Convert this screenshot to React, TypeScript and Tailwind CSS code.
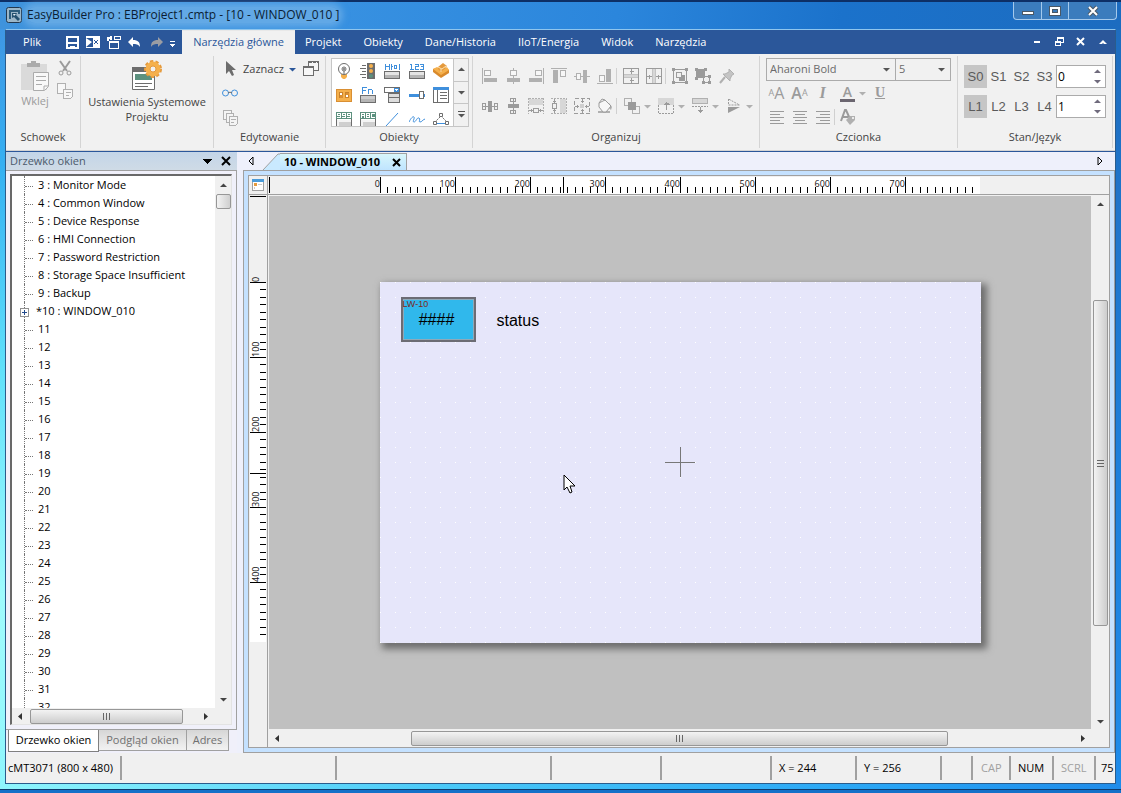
import type { ReactNode } from "react";

const GRAY = "#9b9b9b";
const LIGHT = "#b0b0b0";
const DARK = "#6d6d6d";
const BLUE = "#3f8fdc";
const ORANGE = "#f5b04c";
const GREEN = "#5d917f";

const Icon = ({
  children,
  size = 16,
  crisp = true,
}: {
  children: ReactNode;
  size?: number;
  crisp?: boolean;
}) => (
  <svg
    width={size}
    height={size}
    viewBox={`0 0 ${size} ${size}`}
    fill="none"
    shapeRendering={crisp ? "crispEdges" : "auto"}
    aria-hidden="true"
    className="shrink-0"
  >
    {children}
  </svg>
);

const Caret = ({ dir = "down", color = "#555" }: { dir?: string; color?: string }) => {
  const shapes: Record<string, string> = {
    down: "M0 2h7L3.500 5.500z",
    up: "M0 5h7L3.500 1.500z",
    left: "M5 0v7L1 3.500z",
    right: "M2 0v7l4-3.500z",
  };
  return (
    <svg width="7" height="7" viewBox="0 0 7 7" aria-hidden="true" className="shrink-0">
      <path d={shapes[dir]} fill={color} />
    </svg>
  );
};

/* ---------- object gallery icons ---------- */

const KeyBase = ({ fill = "#e4e4e4" }: { fill?: string }) => (
  <>
    <rect x="1" y="8" width="14" height="7" fill={fill} />
    <path d="M1 12h14v3H1z" fill="#b5b5b5" />
    <path d="M0.500 8.500h15v7h-15z" stroke={DARK} />
  </>
);

const DisplayBase = () => (
  <>
    <path d="M1 9h14v7H1z" fill="#f4f4f4" />
    <path d="M3 11h12v5H3z" fill="#cfcfcf" />
    <path d="M0.500 8v8M15.500 8v8M0 15.500h16" stroke={DARK} />
  </>
);

const objectIcons = [
  {
    name: "Lampa bitowa",
    icon: (
      <Icon crisp={false}>
        <path d="M5 10h6v4l-2 2H7l-2-2z" fill={ORANGE} />
        <circle cx="8" cy="6" r="5.500" stroke={DARK} fill="#fff" />
        <circle cx="8" cy="6" r="2" stroke={DARK} />
        <circle cx="8" cy="6" r="1" fill={DARK} />
        <path d="M8 8v3" stroke={DARK} />
      </Icon>
    ),
  },
  {
    name: "Lampa wielostanowa",
    icon: (
      <Icon crisp={false}>
        <path d="M7 0h8v16H7z" fill={DARK} />
        <path d="M2 2.500h4M0 5.500h6M2 8.500h4M0 11.500h6M2 14.500h4" stroke={DARK} />
        <circle cx="11" cy="3" r="2" fill={ORANGE} />
        <circle cx="11" cy="8" r="2" fill={ORANGE} />
        <circle cx="11" cy="13" r="2" fill={GREEN} />
      </Icon>
    ),
  },
  {
    name: "Ustaw bit",
    icon: (
      <Icon>
        <path d="M1.500 1v6M1 3.500h4M5.500 1v6M7.500 1v6M7 3.500h2M10.500 2v4M10 2.500h3M10 5.500h3M12.500 2v4M15.500 1v6" stroke={BLUE} />
        <KeyBase />
      </Icon>
    ),
  },
  {
    name: "Ustaw słowo",
    icon: (
      <Icon>
        <path
          d="M1 1.500h2M2.500 1v6M1 6.500h4M6 1.500h3.500v2H6.500v3H10M11 1.500h4M14.500 1v6M11 6.500h4M12 3.500h3"
          stroke={BLUE}
        />
        <KeyBase />
      </Icon>
    ),
  },
  {
    name: "Przełącznik",
    icon: (
      <Icon crisp={false}>
        <path d="M0 6l10-3 6 4v3l-8 5-8-6z" fill="#d98a2c" />
        <path d="M0 6l4-2 4 4 6-4 2 3-8 5z" fill={ORANGE} />
        <path d="M5 4l5-4 4 3-3 3-3 3-3-3z" fill="#e59a3d" />
        <path d="M5 4l4 2 4-3M8 6v3" stroke="#fde2b0" />
      </Icon>
    ),
  },
  {
    name: "Przełącznik wielostanowy",
    icon: (
      <Icon>
        <path d="M0.500 2.500h15v12h-15z" fill={ORANGE} stroke="#d98f33" />
        <path d="M3.500 5.500h3v5h-3zM9.500 5.500h3v5h-3z" fill="#fff" stroke="#c9822c" />
        <path d="M4 8h3v3H4zM10 6h3v2h-3z" fill="#d98f33" />
      </Icon>
    ),
  },
  {
    name: "Klawisz funkcyjny",
    icon: (
      <Icon>
        <path d="M2 0.500h5M2.500 0v7M2 3.500h4M8.500 2v5M8 2.500h4M12.500 3v4" stroke={BLUE} />
        <KeyBase fill="#ccc" />
      </Icon>
    ),
  },
  {
    name: "Lista opcji",
    icon: (
      <Icon>
        <path d="M0.500 0.500h15v5h-15z" stroke={DARK} fill="#fff" />
        <path d="M10 1h5v4h-5z" fill={BLUE} />
        <path d="M11 2h3l-1 2h-1z" fill="#fff" />
        <path d="M4.500 6.500h11v4h-11zM4.500 10.500h11v5h-11z" fill="#ddd" stroke={DARK} />
      </Icon>
    ),
  },
  {
    name: "Suwak",
    icon: (
      <Icon>
        <path d="M0 7h10v3H0zM14 7h2v3h-2z" fill={BLUE} />
        <path d="M10.500 4.500h4v7h-4z" stroke={DARK} fill="#fff" />
      </Icon>
    ),
  },
  {
    name: "Tabela",
    icon: (
      <Icon>
        <path d="M0.500 0.500h15v15h-15z" stroke={DARK} fill="#fff" />
        <path d="M0 0h16v3H0z" fill={BLUE} />
        <path d="M4.500 3v12M7 5.500h7M7 8.500h7M7 11.500h7" stroke={DARK} />
      </Icon>
    ),
  },
  {
    name: "Wartość liczbowa",
    icon: (
      <Icon>
        <path d="M0 1h16v7H0z" fill={GREEN} />
        <path
          d="M5 4.500H1.500v-2h3v4H1M10 4.500H6.500v-2h3v4H6M15 4.500h-3.500v-2h3v4H11"
          stroke="#fff"
        />
        <DisplayBase />
      </Icon>
    ),
  },
  {
    name: "Wartość ASCII",
    icon: (
      <Icon>
        <path d="M0 1h16v7H0z" fill={GREEN} />
        <path
          d="M1.500 7V2.500h3V7M1 4.500h3M6.500 2.500h3v4h-3zM6 4.500h3M15 2.500h-3.500v4H15"
          stroke="#fff"
        />
        <DisplayBase />
      </Icon>
    ),
  },
  {
    name: "Linia",
    icon: (
      <Icon crisp={false}>
        <path d="M2 15L14 2" stroke={BLUE} />
      </Icon>
    ),
  },
  {
    name: "Krzywa",
    icon: (
      <Icon crisp={false}>
        <path d="M0 11C2 7 4 5 5 6s-2 5 0 5 3-5 5-4-1 4 1 4 2-2 5-3" stroke={BLUE} />
      </Icon>
    ),
  },
  {
    name: "Łącznik",
    icon: (
      <Icon crisp={false}>
        <path d="M2 12.500h12" stroke={BLUE} />
        <path d="M8 5l6 6M7 6l-4 4" stroke={DARK} strokeDasharray="2 1" />
        <path d="M6.500 2.500h3v3h-3zM0.500 10.500h3v3h-3zM12.500 10.500h3v3h-3z" stroke={DARK} fill="#fff" />
      </Icon>
    ),
  },
];

/* ---------- arrange icons ---------- */

const alignIcons = [
  { line: "M0.500 0v16", box: "M2.500 2.500h6v5h-6z", solid: "M2 10h13v4H2z" },
  { line: "M8.500 0v16", box: "M5.500 2.500h6v5h-6z", solid: "M2 10h13v4H2z" },
  { line: "M15.500 0v16", box: "M7.500 2.500h6v5h-6z", solid: "M1 10h13v4H1z" },
  { line: "M0 0.500h16", box: "M9.500 2.500h5v6h-5z", solid: "M2 2h5v13H2z" },
  { line: "M0 8.500h16", box: "M2.500 5.500h4v6h-4z", solid: "M9 2h4v13H9z" },
  { line: "M0 15.500h16", box: "M2.500 7.500h5v6h-5z", solid: "M9 1h5v13H9z" },
];

const spacingIcons = [
  <>
    <path d="M0 8.500h16M0.500 5.500h3v6h-3zM12.500 5.500h3v6h-3z" stroke={GRAY} fill="#f0f0f0" />
    <path d="M6 3h4v11H6z" fill={GRAY} />
  </>,
  <>
    <path d="M8.500 0v16M5.500 0.500h5v3h-5zM5.500 12.500h5v3h-5z" stroke={GRAY} fill="#f0f0f0" />
    <path d="M3 6h11v4H3z" fill={GRAY} />
  </>,
  <>
    <path d="M1 1h14v6H1z" fill="#d7d7d7" />
    <path d="M0.500 0v16M15.500 0v16M1 0.500h14" stroke={LIGHT} strokeDasharray="2 1" />
    <path d="M5.500 10.500h5v4h-5zM1 12.500h4M11 12.500h4M3.500 11v3M12.500 11v3" stroke={GRAY} />
  </>,
  <>
    <path d="M9 1h6v14H9z" fill="#d7d7d7" />
    <path d="M0 0.500h16M0 15.500h16M15.500 0v16" stroke={LIGHT} strokeDasharray="2 1" />
    <path d="M1.500 5.500h4v5h-4zM3.500 1v4M3.500 11v4M2 3.500h3M2 12.500h3" stroke={GRAY} />
  </>,
  <>
    <path d="M0.500 0.500h15v15h-15z" stroke={GRAY} strokeDasharray="4 2" />
    <path d="M6 6h4v4H6z" fill="#cfcfcf" />
    <path d="M8.500 1v4M8.500 11v4M1 8.500h4M11 8.500h4M7 3.500h3M7 12.500h3M3.500 7v3M12.500 7v3" stroke={GRAY} />
  </>,
  <g shapeRendering="auto">
    <path d="M1 13h12v2H1zM12 5l3 4-1 3-3-3z" fill={LIGHT} />
    <path d="M2 5l6-3 6 6-5 6H6L2 9zM2 5l3-4 3 1" stroke={GRAY} fill="#f7f7f7" />
  </g>,
];

const layerIcons = [
  <>
    <path d="M0.500 0.500h7v7h-7zM8.500 8.500h7v7h-7z" stroke={LIGHT} />
    <path d="M4 4h8v8H4z" fill={GRAY} />
  </>,
  <>
    <path d="M0 0h16v7H0z" fill="#d7d7d7" />
    <path d="M0.500 7v8.500h15V7" stroke={GRAY} strokeDasharray="2 1" />
    <path d="M8.500 4v8M7 5.500h4M6 6.500h6" stroke={GRAY} />
  </>,
  <>
    <path d="M0.500 0.500h15v5h-15z" fill="#d7d7d7" stroke={LIGHT} />
    <path d="M0 8.500h16" stroke={GRAY} strokeDasharray="2 1" />
    <path d="M8.500 9v6M6 12.500h5M7 13.500h3" stroke={GRAY} />
  </>,
  <g shapeRendering="auto">
    <path d="M2.500 1v6h11z" stroke={GRAY} strokeDasharray="2 1" />
    <path d="M2 9h12L2 15z" fill={GRAY} />
  </g>,
];

const FrameIcon = ({ vertical = false }: { vertical?: boolean }) => (
  <Icon>
    <g transform={vertical ? "rotate(90 8 8)" : undefined}>
      <path d="M1 7h14v3H1z" fill="#d7d7d7" />
      <path d="M1 6.500h14M1 9.500h14" stroke="#c4c4c4" />
      <path d="M0.500 0.500h15v15h-15zM8.500 1v5M8.500 10v5M7 3.500h4M7 12.500h4" stroke={GRAY} />
    </g>
  </Icon>
);

const ToolButton = ({
  label,
  children,
  className = "w-[23px]",
}: {
  label: string;
  children: ReactNode;
  className?: string;
}) => (
  <button aria-label={label} className={`flex h-6 items-center justify-center ${className}`}>
    {children}
  </button>
);

const Group = ({
  title,
  className,
  children,
}: {
  title?: string;
  className: string;
  children: ReactNode;
}) => (
  <section className={`flex shrink-0 flex-col border-r border-[#d4d4d4] ${className}`}>
    <div className="h-[73px]">{children}</div>
    {title && <h2 className="text-center leading-4">{title}</h2>}
  </section>
);

const Divider = () => <span className="h-4 w-px bg-[#d0d0d0]" />;

/* ---------- title bar and menu ---------- */

const TitleBar = () => (
  <header className="flex h-[29px] items-start justify-between border-t-2 border-[#0d2f66] bg-[linear-gradient(100deg,#3f93dc_0%,#3a93e2_25%,#2b86dc_55%,#1b72cb_75%,#1c6cc0_100%)] pr-1 pl-[6px]">
    <div className="flex h-[26px] items-center gap-[5px]">
      <svg width="16" height="16" viewBox="0 0 16 16" aria-hidden="true">
        <rect x="0.500" y="0.500" width="15" height="15" rx="2" fill="#9bb6c8" stroke="#22384f" />
        <path d="M4 12V4h9v3" fill="none" stroke="#2c5c7c" strokeWidth="2" />
        <path d="M6 6h5l-1 2 4 4-2 2-4-4-2 1z" fill="#24516f" />
        <path d="M7 7h3l-2 2z" fill="#e6f1f7" />
      </svg>
      <h1 className="rounded-full bg-[#7db8ea]/60 text-xs text-[#0b1d33] shadow-[0_0_6px_4px_#7db8ea99]">
        EasyBuilder Pro : EBProject1.cmtp - [10 - WINDOW_010 ]
      </h1>
    </div>
    <div className="flex h-[18px] overflow-hidden rounded-b border border-t-0 border-[#a4c9ec] bg-[#3b7cbd]">
      <button aria-label="Minimalizuj" className="flex w-[28px] items-center justify-center border-r border-[#a4c9ec]">
        <Icon size={14}>
          <path d="M1.500 7.500h11v3h-11z" fill="#fff" stroke="#4a5866" />
        </Icon>
      </button>
      <button aria-label="Maksymalizuj" className="flex w-[27px] items-center justify-center border-r border-[#a4c9ec]">
        <Icon size={14}>
          <path d="M1.500 2.500h11v9h-11z" fill="#fff" stroke="#4a5866" />
          <path d="M4.500 5.500h5v3h-5z" fill="#3b7cbd" stroke="#4a5866" />
        </Icon>
      </button>
      <button aria-label="Zamknij" className="flex w-[47px] items-center justify-center">
        <Icon size={14} crisp={false}>
          <path d="M3 3l8 8M11 3l-8 8" stroke="#4a5866" strokeWidth="4" />
          <path d="M3 3l8 8M11 3l-8 8" stroke="#fff" strokeWidth="2" />
        </Icon>
      </button>
    </div>
  </header>
);

const MenuBar = () => {
  const tabs = ["Projekt", "Obiekty", "Dane/Historia", "IIoT/Energia", "Widok", "Narzędzia"];
  return (
    <nav className="flex h-[24px] items-center bg-[#2b579a] text-white">
      <button className="w-[52px]">Plik</button>
      <div className="flex w-[124px] items-center gap-1 pl-[6px]">
        <button aria-label="Zapisz" className="w-[17px]">
          <Icon>
            <path d="M3 3h11v11H3z" stroke="#fff" strokeWidth="2" />
            <path d="M2 8h13v2H2zM6 12h5v2H6z" fill="#fff" />
          </Icon>
        </button>
        <button aria-label="Kompiluj" className="w-[17px]">
          <Icon crisp={false}>
            <path d="M1 2h14v12H1z" fill="#fff" />
            <path d="M1 4h13v9H1z" fill="#2b579a" />
            <path d="M1 4l6 4-6 5zM8 4h6v9H8z" fill="#fff" />
            <path d="M9 6l4 4M13 6l-4 4" stroke="#2b579a" />
          </Icon>
        </button>
        <button aria-label="Pobierz" className="w-[17px]">
          <Icon>
            <path d="M3.500 7.500h9v7h-9zM3 8.500h9M8.500 2.500h6v3h-6z" stroke="#fff" />
            <path d="M2 7V4h4M5 2v4" stroke="#fff" strokeWidth="2" />
          </Icon>
        </button>
        <button aria-label="Cofnij" className="w-[17px]">
          <Icon crisp={false}>
            <path d="M6 3v3c5 0 7 2 7 7-2-3-4-3-7-3v3L1 8z" fill="#fff" />
          </Icon>
        </button>
        <button aria-label="Ponów" className="w-[17px]">
          <Icon crisp={false}>
            <path d="M10 3v3c-5 0-7 2-7 7 2-3 4-3 7-3v3l5-5z" fill="#9b9da3" />
          </Icon>
        </button>
        <button aria-label="Dostosuj" className="pt-1">
          <Icon size={7}>
            <path d="M1 0.500h5" stroke="#fff" />
            <path d="M1 3h5L3.500 6z" fill="#fff" />
          </Icon>
        </button>
      </div>
      <button className="h-full w-[113px] border-t border-[#e8e8e8] bg-[#f1f1f1] whitespace-nowrap text-[#2b579a]">
        Narzędzia główne
      </button>
      <div className="flex items-center gap-[22px] pl-[10px]">
        {tabs.map((tab) => (
          <button key={tab}>{tab}</button>
        ))}
      </div>
      <div className="ml-auto flex items-center gap-[10px] pr-[6px]">
        <button aria-label="Minimalizuj okno">
          <Icon size={12}>
            <path d="M3 5h6v2H3z" fill="#fff" />
          </Icon>
        </button>
        <button aria-label="Przywróć okno">
          <Icon size={12}>
            <path d="M4.500 2.500h6v4h-6z" stroke="#fff" />
            <path d="M4 1h7v2H4z" fill="#fff" />
            <path d="M2.500 5.500h5v4h-5z" stroke="#fff" fill="#2b579a" />
            <path d="M2 5h6v2H2z" fill="#fff" />
          </Icon>
        </button>
        <button aria-label="Zamknij okno">
          <Icon size={12} crisp={false}>
            <path d="M2 2l7 7M9 2L2 9" stroke="#fff" strokeWidth="2" />
          </Icon>
        </button>
        <button aria-label="Zwiń wstążkę">
          <Icon size={12} crisp={false}>
            <path d="M2 8l4-4 4 4H7L6 7 5 8z" fill="#fff" />
          </Icon>
        </button>
      </div>
    </nav>
  );
};

/* ---------- ribbon ---------- */

const StateRow = ({
  labels,
  value,
  name,
}: {
  labels: string[];
  value: string;
  name: string;
}) => (
  <div className="flex h-[23px] items-center">
    {labels.map((label) => (
      <button
        key={label}
        className={`h-full w-[23px] font-['Liberation_Sans',sans-serif] text-[13px] text-[#5a5a5a] ${
          label === "S0" || label === "L1" ? "bg-[#c6c6c6]" : ""
        }`}
      >
        {label}
      </button>
    ))}
    <div className="flex h-full w-[50px] border border-[#ababab] bg-white">
      <input aria-label={name} defaultValue={value} className="w-8 pl-px text-xs text-black outline-none" />
      <div className="flex flex-1 flex-col items-center justify-center gap-[3px]">
        <button aria-label={`${name}: więcej`}>
          <Caret dir="up" color="#6f6a7c" />
        </button>
        <button aria-label={`${name}: mniej`}>
          <Caret color="#6f6a7c" />
        </button>
      </div>
    </div>
  </div>
);

const alignLines = [
  "M0 1.500h14M0 4.500h10M0 7.500h14M0 10.500h10M0 13.500h14",
  "M0 1.500h14M2 4.500h10M0 7.500h14M2 10.500h10M0 13.500h14",
  "M0 1.500h14M4 4.500h10M0 7.500h14M4 10.500h10M0 13.500h14",
];

const Ribbon = () => (
  <div className="flex h-[97px] overflow-hidden border-b border-[#d4d4d4] bg-[#f1f1f1] pt-[2px] pb-[2px] text-[#444]">
    <Group title="Schowek" className="w-[75px]">
      <div className="flex h-full gap-[7px] pt-[4px] pl-[14px]">
        <button className="flex w-[30px] flex-col items-center text-[#9b9b9b]">
          <svg width="30" height="32" viewBox="0 0 30 32" aria-hidden="true">
            <path d="M1 4h26v26H1z" fill="#dadada" />
            <path d="M7 3h4V1h5v2h4v4H7z" fill="#ababab" />
            <path d="M13.500 12.500h15v14l-4 4h-11z" fill="#f8f8f8" stroke="#ababab" />
            <path d="M28 26h-4v4M16 16.500h10M16 20.500h10M16 24.500h6" stroke="#ababab" fill="none" />
          </svg>
          <span className="mt-px">Wklej</span>
        </button>
        <div className="flex flex-col gap-[7px]">
          <button aria-label="Wytnij">
            <Icon crisp={false}>
              <path d="M3 1l7 10M13 1L6 11" stroke={GRAY} strokeWidth="2" />
              <circle cx="4" cy="13" r="2" stroke={GRAY} />
              <circle cx="12" cy="13" r="2" stroke={GRAY} />
            </Icon>
          </button>
          <button aria-label="Kopiuj">
            <Icon>
              <path d="M0.500 0.500h8v10h-8z" stroke={LIGHT} fill="#f7f7f7" />
              <path d="M6.500 6.500h9v7l-2 2h-7z" stroke={LIGHT} fill="#f7f7f7" />
              <path d="M9 9.500h5M9 12.500h3" stroke={LIGHT} />
            </Icon>
          </button>
        </div>
      </div>
    </Group>

    <Group className="w-[133px]">
      <button className="flex w-full flex-col items-center pt-[4px] leading-[15px]">
        <svg width="32" height="34" viewBox="0 0 32 34" aria-hidden="true">
          <path d="M1.500 9.500h22v20h-22z" fill="#fff" stroke={DARK} />
          <path d="M1 7h14v5H1z" fill={DARK} />
          <path d="M4 14h17v6H4z" fill={GREEN} />
          <path d="M4 23.500h17M4 26.500h13" stroke={DARK} />
          <circle cx="22" cy="9" r="7" fill="none" stroke="#e59a3d" strokeWidth="4" strokeDasharray="3 2" />
          <circle cx="22" cy="9" r="5" fill="none" stroke={ORANGE} strokeWidth="5" />
          <circle cx="22" cy="9" r="3" fill="#f1f1f1" stroke="#e59a3d" />
        </svg>
        <span>Ustawienia Systemowe</span>
        <span>Projektu</span>
      </button>
    </Group>

    <Group title="Edytowanie" className="w-[112px]">
      <div className="flex flex-col items-start pl-[8px]">
        <div className="flex h-[26px] items-center gap-1">
          <button className="flex items-center gap-[5px]">
            <Icon crisp={false}>
              <path d="M4 0v13l3-3 3 5 2-1-2-5h4z" fill={DARK} />
            </Icon>
            Zaznacz
            <Caret color="#2b579a" />
          </button>
          <ToolButton label="Okna">
            <Icon>
              <path d="M5.500 0.500h10v9h-10z" stroke={DARK} fill="#f7f7f7" />
              <path d="M6 1.500h9" stroke={DARK} strokeDasharray="3 1" />
              <path d="M0.500 5.500h10v9h-10z" stroke={DARK} fill="#f7f7f7" />
              <path d="M0 5h11v2H0z" fill={DARK} />
            </Icon>
          </ToolButton>
        </div>
        <ToolButton label="Znajdź" className="w-4">
          <Icon crisp={false}>
            <circle cx="3.500" cy="7" r="3" stroke={BLUE} />
            <circle cx="12.500" cy="7" r="3" stroke={BLUE} />
            <path d="M6 7c1-1 3-1 4 0" stroke={DARK} />
          </Icon>
        </ToolButton>
        <ToolButton label="Powiel" className="w-4">
          <Icon>
            <path d="M1.500 0.500h8v9h-8z" stroke={LIGHT} fill="#f4f4f4" />
            <path d="M4.500 3.500h7v9h-7z" stroke={LIGHT} fill="#f4f4f4" />
            <path d="M7.500 6.500h8v7l-2 2h-6z" stroke={LIGHT} fill="#f4f4f4" />
            <path d="M9 9.500h5M9 12.500h3" stroke={LIGHT} />
          </Icon>
        </ToolButton>
      </div>
    </Group>

    <Group title="Obiekty" className="w-[147px]">
      <div className="flex h-[71px] w-[143px] pt-[2px] pl-[5px]">
        <div className="grid w-[123px] auto-rows-[24px] grid-cols-5 overflow-hidden border border-[#c6c6c6] bg-white">
          {objectIcons.map((item) => (
            <ToolButton key={item.name} label={item.name} className="w-full">
              {item.icon}
            </ToolButton>
          ))}
        </div>
        <div className="flex w-[15px] flex-col divide-y divide-[#c6c6c6] border border-l-0 border-[#c6c6c6]">
          <button aria-label="W górę" className="flex flex-1 items-center justify-center">
            <Caret dir="up" />
          </button>
          <button aria-label="W dół" className="flex flex-1 items-center justify-center">
            <Caret />
          </button>
          <button aria-label="Więcej" className="flex flex-1 flex-col items-center justify-center">
            <span className="h-px w-[7px] bg-[#555]" />
            <Caret />
          </button>
        </div>
      </div>
    </Group>

    <Group title="Organizuj" className="w-[287px]">
      <div className="flex flex-col gap-[6px] pt-[8px] pl-[5px]">
        <div className="flex items-center">
          {alignIcons.map((icon, index) => (
            <ToolButton key={index} label={`Wyrównaj ${index + 1}`}>
              <Icon>
                <path d={icon.line} stroke={LIGHT} />
                <path d={icon.box} stroke={LIGHT} fill="#f7f7f7" />
                <path d={icon.solid} fill={LIGHT} />
              </Icon>
            </ToolButton>
          ))}
          <Divider />
          <ToolButton label="Ta sama wysokość" className="ml-[2px] w-[23px]">
            <FrameIcon />
          </ToolButton>
          <ToolButton label="Ta sama szerokość">
            <FrameIcon vertical />
          </ToolButton>
          <Divider />
          <ToolButton label="Grupuj" className="ml-[2px] w-[23px]">
            <Icon>
              <path d="M1.500 1.500h13v13h-13z" stroke={GRAY} />
              <path d="M0 0h3v3H0zM13 0h3v3h-3zM0 13h3v3H0zM13 13h3v3h-3zM7 7h6v6H7z" fill={GRAY} />
              <path d="M4.500 4.500h5v5h-5z" stroke={GRAY} fill="#f0f0f0" />
            </Icon>
          </ToolButton>
          <ToolButton label="Rozgrupuj">
            <Icon>
              <path d="M8.500 13.500v-5h6v6h-6z" stroke={GRAY} fill="#f0f0f0" />
              <path d="M1 1h9v9H1zM0 0h3v3H0zM9 0h3v3H9zM0 9h3v3H0z" fill={GRAY} />
              <path d="M13 7h3v3h-3zM7 13h3v3H7zM13 13h3v3h-3z" fill={GRAY} />
            </Icon>
          </ToolButton>
          <ToolButton label="Przypnij" className="w-[25px]">
            <Icon crisp={false}>
              <path d="M10 1l5 5-2 1-2 4v2L4 6h2l4-2z" fill="#c4c4c4" stroke={LIGHT} />
              <path d="M6 9l-5 6" stroke={LIGHT} strokeWidth="2" />
            </Icon>
          </ToolButton>
        </div>
        <div className="flex items-center">
          {spacingIcons.map((icon, index) => (
            <ToolButton key={index} label={`Odstęp ${index + 1}`}>
              <Icon>{icon}</Icon>
            </ToolButton>
          ))}
          <Divider />
          {layerIcons.map((icon, index) => (
            <ToolButton key={index} label={`Warstwa ${index + 1}`} className="w-[34px] gap-1 pl-[6px]">
              <Icon>{icon}</Icon>
              <Caret color={LIGHT} />
            </ToolButton>
          ))}
        </div>
      </div>
    </Group>

    <Group title="Czcionka" className="w-[198px]">
      <div className="flex pt-[2px] pl-[6px] text-[#6a6a6a]">
        <div className="relative">
          <select aria-label="Czcionka" className="h-[23px] w-[130px] appearance-none border border-[#ababab] bg-[#f1f1f1] pl-[3px]">
            <option>Aharoni Bold</option>
          </select>
          <span className="pointer-events-none absolute top-2 right-[6px]">
            <Caret />
          </span>
        </div>
        <div className="relative">
          <select aria-label="Rozmiar czcionki" className="h-[23px] w-[55px] appearance-none border border-l-0 border-[#ababab] bg-[#f1f1f1] pl-[3px]">
            <option>5</option>
          </select>
          <span className="pointer-events-none absolute top-2 right-[6px]">
            <Caret />
          </span>
        </div>
      </div>
      <div className="flex items-center pl-[5px] text-[#9b9b9b]">
        <ToolButton label="Powiększ czcionkę">
          <span className="text-[9px]">A</span>
          <span className="text-base">A</span>
        </ToolButton>
        <ToolButton label="Pomniejsz czcionkę">
          <span className="text-base font-semibold">A</span>
          <span className="text-[9px]">A</span>
        </ToolButton>
        <ToolButton label="Kursywa">
          <span className="font-['Liberation_Serif',serif] text-base font-bold italic">I</span>
        </ToolButton>
        <ToolButton label="Kolor czcionki" className="w-[38px] gap-1">
          <span className="border-b-3 border-[#6b6670] px-[3px] text-sm leading-[14px] font-semibold">A</span>
          <Caret color={LIGHT} />
        </ToolButton>
        <ToolButton label="Podkreślenie" className="w-4">
          <span className="font-['Liberation_Serif',serif] text-sm font-bold underline">U</span>
        </ToolButton>
      </div>
      <div className="flex items-center pl-[5px]">
        {alignLines.map((d, index) => (
          <ToolButton key={d} label={`Wyrównanie tekstu ${index + 1}`}>
            <Icon size={14}>
              <path d={d} stroke={GRAY} />
            </Icon>
          </ToolButton>
        ))}
        <Divider />
        <ToolButton label="Styl tekstu" className="w-[25px]">
          <Icon crisp={false}>
            <path d="M1 12L5 1h1l4 9M2 8h6" stroke={GRAY} strokeWidth="2" />
            <path d="M6 11l4-4h5v4l-5 5z" fill={LIGHT} />
            <circle cx="13" cy="9" r="1" fill="#fff" />
          </Icon>
        </ToolButton>
      </div>
    </Group>

    <Group title="Stan/Język" className="w-[155px]">
      <div className="flex flex-col gap-[7px] pt-[9px] pl-[6px]">
        <StateRow name="Stan" labels={["S0", "S1", "S2", "S3"]} value="0" />
        <StateRow name="Język" labels={["L1", "L2", "L3", "L4"]} value="1" />
      </div>
    </Group>
  </div>
);

/* ---------- scrollbars ---------- */

const Grip = ({ vertical = false }: { vertical?: boolean }) => (
  <Icon size={9}>
    <path
      d={vertical ? "M1 1.500h7M1 4.500h7M1 7.500h7" : "M1.500 1v7M4.500 1v7M7.500 1v7"}
      stroke="#666"
    />
  </Icon>
);

/* ---------- window tree ---------- */

const namedWindows = [
  "3 : Monitor Mode",
  "4 : Common Window",
  "5 : Device Response",
  "6 : HMI Connection",
  "7 : Password Restriction",
  "8 : Storage Space Insufficient",
  "9 : Backup",
  "*10 : WINDOW_010",
];
const windows = [...namedWindows, ...Array.from({ length: 22 }, (_, i) => `${i + 11}`)];

const WindowTree = () => (
  <aside className="flex w-[231px] shrink-0 flex-col bg-[#f0f0fa]">
    <div className="flex h-[18px] shrink-0 items-center bg-[linear-gradient(#c3d5e8,#cfdbe6)] pr-[6px] pl-[4px] text-[#4b5a6b]">
      <h2 className="flex-1">Drzewko okien</h2>
      <button aria-label="Menu panelu" className="mr-[9px]">
        <Icon size={10}>
          <path d="M0 3h10L5 8z" fill="#000" />
        </Icon>
      </button>
      <button aria-label="Zamknij panel">
        <Icon size={10} crisp={false}>
          <path d="M1 1l8 8M9 1L1 9" stroke="#000" strokeWidth="2" />
        </Icon>
      </button>
    </div>
    <div className="flex min-h-0 flex-1 flex-col border-t border-r border-b border-[#a0a0a0] px-[4px] pt-[3px] pb-[4px]">
      <div className="flex min-h-0 flex-1 flex-col border border-t-2 border-l-2 border-[#e3e3e3] border-t-[#696969] border-l-[#696969] bg-white">
        <div className="flex min-h-0 flex-1">
          <ul className="min-h-0 flex-1 overflow-hidden">
            {windows.map((name, index) => (
              <li key={name} className="flex h-[18px] items-center text-black">
                <span className="ml-[12px] flex h-full w-[9px] items-center border-l border-dotted border-[#777] pt-[3px]">
                  {index === 7 ? (
                    <button aria-label="Rozwiń WINDOW_010" className="-ml-[5px] bg-white">
                      <Icon size={9}>
                        <path d="M0.500 0.500h8v8h-8z" stroke="#919191" />
                        <path d="M2 4.500h5M4.500 2v5" stroke="#224a8c" />
                      </Icon>
                    </button>
                  ) : (
                    <span className="w-full border-t border-dotted border-[#777]" />
                  )}
                </span>
                <span className={index === 7 ? "pl-[3px]" : "pl-[5px]"}>{name}</span>
              </li>
            ))}
          </ul>
          <div className="flex w-4 flex-col items-center bg-[#f0f0f0] pt-[6px] pb-[5px]">
            <button aria-label="Przewiń w górę">
              <Caret dir="up" color="#444" />
            </button>
            <span className="mt-[5px] h-[15px] w-[15px] rounded-xs border border-[#979797] bg-[linear-gradient(90deg,#f3f3f3,#cfcfcf)]" />
            <button aria-label="Przewiń w dół" className="mt-auto">
              <Caret color="#444" />
            </button>
          </div>
        </div>
        <div className="flex h-4 items-center bg-[#f0f0f0] pr-[22px] pl-[5px]">
          <button aria-label="Przewiń w lewo">
            <Caret dir="left" color="#333" />
          </button>
          <span className="mr-auto ml-[6px] flex h-[15px] w-[153px] items-center justify-center rounded-xs border border-[#979797] bg-[linear-gradient(#f3f3f3,#cdcdcd)]">
            <Grip />
          </span>
          <button aria-label="Przewiń w prawo">
            <Caret dir="right" color="#333" />
          </button>
        </div>
      </div>
    </div>
    <div className="flex h-[23px] shrink-0 items-start pl-[2px] text-[#707070]">
      <button className="h-[22px] w-[91px] border border-t-0 border-[#808080] bg-white text-black">Drzewko okien</button>
      <button className="h-[21px] w-[88px] border-r border-b border-[#a0a0a0] bg-[linear-gradient(#d6d6d6,#f2f2f2)]">
        Podgląd okien
      </button>
      <button className="h-[21px] w-[42px] border-r border-b border-[#a0a0a0] bg-[linear-gradient(#d6d6d6,#f2f2f2)]">
        Adres
      </button>
    </div>
  </aside>
);

/* ---------- rulers: one step of 10 units is 7.5 px ---------- */

const HorizontalRuler = () => (
  <svg width="712" height="18" shapeRendering="crispEdges" className="shrink-0" aria-hidden="true">
    <rect x="112" y="1" width="600" height="17" fill="#fff" />
    <rect x="1" y="1" width="1" height="16" fill="#000" />
    <rect x="295" y="1" width="1" height="16" fill="#000" />
    {Array.from({ length: 80 }, (_, i) => {
      const major = i % 10 === 0;
      return (
        <rect
          key={i}
          x={112 + Math.floor(i * 7.5)}
          y={major ? 1 : 11}
          width="1"
          height={major ? 16 : 6}
          fill="#000"
        />
      );
    })}
    {Array.from({ length: 8 }, (_, i) => (
      <text key={i} x={112 + i * 75} y="11" fontSize="9" textAnchor="end" fill="#111">
        {i * 100}
      </text>
    ))}
  </svg>
);

const VerticalRuler = () => (
  <svg width="18" height="448" shapeRendering="crispEdges" className="shrink-0" aria-hidden="true">
    <rect x="1" y="87" width="16" height="360" fill="#fff" />
    <rect x="1" y="1" width="16" height="1" fill="#000" />
    <rect x="1" y="278" width="16" height="1" fill="#000" />
    {Array.from({ length: 48 }, (_, i) => {
      const major = i % 10 === 0;
      return (
        <rect
          key={i}
          x={major ? 1 : 11}
          y={87 + Math.floor(i * 7.5)}
          width={major ? 16 : 6}
          height="1"
          fill="#000"
        />
      );
    })}
    {Array.from({ length: 5 }, (_, i) => (
      <text
        key={i}
        fontSize="9"
        fill="#111"
        transform={`translate(10 ${87 + i * 75}) rotate(-90)`}
      >
        {i * 100}
      </text>
    ))}
  </svg>
);

/* ---------- editor ---------- */

const Screen = () => (
  <div className="relative h-[361px] w-[601px] shrink-0 bg-[#e6e6fa] font-['Liberation_Sans',sans-serif] text-base text-black shadow-[4px_4px_7px_2px_#6e6e6e]">
    <svg width="100%" height="100%" aria-hidden="true" className="absolute inset-0">
      <defs>
        <pattern id="grid" width="15" height="15" patternUnits="userSpaceOnUse">
          <rect width="1" height="1" fill="#fff" />
        </pattern>
      </defs>
      <rect width="100%" height="100%" fill="url(#grid)" />
      <path d="M285 180.500h30M300.500 165v30" stroke="#777" shapeRendering="crispEdges" />
    </svg>
    <div className="absolute top-[15px] left-[21px] flex h-[45px] w-[75px] items-center justify-center border-2 border-[#6c6c74] bg-[#30b8ec] pr-[3px] shadow-[inset_0_0_0_1px_#8fa9b8]">
      <span className="absolute top-0 left-0 text-[9px] leading-[10px] text-[#7a2a1c]">LW-10</span>
      <span>####</span>
    </div>
    <span className="absolute top-[27px] left-[117px]">status</span>
    <svg width="13" height="20" viewBox="0 0 13 20" aria-hidden="true" className="absolute top-[192px] left-[183px]">
      <path d="M1 1v15l3-3 3 6 2-1-2-6h5z" fill="#fff" stroke="#000" />
    </svg>
  </div>
);

const Editor = () => (
  <main className="ml-[6px] flex min-w-0 flex-1 flex-col">
    <div className="flex h-[18px] shrink-0 items-center justify-between">
      <div className="flex h-full items-center">
        <button aria-label="Poprzednia karta" className="pl-[3px]">
          <Icon size={10} crisp={false}>
            <path d="M7 1v8L3 5z" stroke="#000" />
          </Icon>
        </button>
        <div className="flex h-full items-end">
          <svg width="18" height="17" viewBox="0 0 18 17" aria-hidden="true" className="ml-[6px]">
            <path d="M1 17L16 1h2v16z" fill="#c9e9ff" />
            <path d="M1 17L16 1h2" stroke="#a0a0a0" fill="none" />
          </svg>
          <div className="flex h-[17px] items-center gap-3 border-t border-r border-[#a0a0a0] bg-[linear-gradient(#d8f6fb,#bfe4ff)] pt-px pr-1 pl-1 text-black">
            <button className="font-bold">10 - WINDOW_010</button>
            <button aria-label="Zamknij kartę">
              <Icon size={10} crisp={false}>
                <path d="M1 1l7 7M8 1L1 8" stroke="#000" strokeWidth="2" />
              </Icon>
            </button>
          </div>
        </div>
      </div>
      <button aria-label="Następna karta" className="pr-[10px]">
        <Icon size={10} crisp={false}>
          <path d="M3 1v8l4-4z" stroke="#000" />
        </Icon>
      </button>
    </div>
    <div className="flex min-h-0 flex-1 flex-col border border-[#a0a0a0] bg-[#c4e1ff] p-[4px]">
      <div className="flex min-h-0 flex-1 flex-col border border-[#a0a0a0] bg-[#f0f0f0]">
        <div className="flex h-[19px] shrink-0 border-b border-[#a0a0a0]">
          <div className="flex w-[19px] items-center justify-center border-r border-[#a0a0a0]">
            <Icon size={12}>
              <path d="M0.500 0.500h11v11h-11z" stroke="#a0a0a0" fill="#fff" />
              <path d="M0 0h12v3H0z" fill="#4a9bd9" />
              <path d="M2 4h3v3H2z" fill="#e59a3d" />
              <path d="M6 5h4v1H6zM2 8h1v2H2z" fill="#c9c9c9" />
            </Icon>
          </div>
          <div className="min-w-0 flex-1 overflow-hidden">
            <HorizontalRuler />
          </div>
        </div>
        <div className="flex min-h-0 flex-1">
          <div className="w-[19px] shrink-0 overflow-hidden border-r border-[#a0a0a0]">
            <VerticalRuler />
          </div>
          <div className="flex min-w-0 flex-1 flex-col">
            <div className="flex min-h-0 flex-1">
              <div className="mt-px ml-px flex min-w-0 flex-1 items-center justify-center overflow-hidden bg-[#c0c0c0]">
                <Screen />
              </div>
              <div className="flex w-[18px] flex-col items-center pt-[6px] pb-[4px]">
                <button aria-label="Obszar w górę">
                  <Caret dir="up" color="#444" />
                </button>
                <div className="flex w-full flex-1 flex-col items-center pt-[92px]">
                  <span className="flex h-[326px] w-[15px] items-center justify-center rounded-xs border border-[#979797] bg-[linear-gradient(90deg,#f3f3f3,#cdcdcd)]">
                    <Grip vertical />
                  </span>
                </div>
                <button aria-label="Obszar w dół">
                  <Caret color="#444" />
                </button>
              </div>
            </div>
            <div className="flex h-[18px] shrink-0 items-center pr-[23px] pl-[6px]">
              <button aria-label="Obszar w lewo">
                <Caret dir="left" color="#333" />
              </button>
              <div className="flex min-w-0 flex-1 pl-[130px]">
                <span className="flex h-[15px] w-[537px] items-center justify-center rounded-xs border border-[#979797] bg-[linear-gradient(#f3f3f3,#cdcdcd)]">
                  <Grip />
                </span>
              </div>
              <button aria-label="Obszar w prawo">
                <Caret dir="right" color="#333" />
              </button>
            </div>
          </div>
        </div>
      </div>
    </div>
  </main>
);

/* ---------- status bar ---------- */

const statusCells = [
  { id: "model", text: "cMT3071 (800 x 480)", className: "w-[116px] pl-[2px] text-black" },
  { id: "a", text: "", className: "w-[215px]" },
  { id: "b", text: "", className: "w-[215px]" },
  { id: "c", text: "", className: "w-[110px]" },
  { id: "d", text: "", className: "w-[110px]" },
  { id: "x", text: "X = 244", className: "w-[85px] pl-[7px] text-black" },
  { id: "y", text: "Y = 256", className: "w-[85px] pl-[7px] text-black" },
  { id: "e", text: "", className: "w-[31px]" },
  { id: "cap", text: "CAP", className: "w-[38px] pl-[8px] text-[#a0a0a0]" },
  { id: "num", text: "NUM", className: "w-[43px] pl-[7px] text-black" },
  { id: "scrl", text: "SCRL", className: "w-[42px] pl-[7px] text-[#a0a0a0]" },
];

const StatusBar = () => (
  <footer className="flex h-[30px] shrink-0 items-center overflow-hidden bg-[#f0f0f0] whitespace-nowrap">
    {statusCells.map((cell) => (
      <span key={cell.id} className={`flex h-6 shrink-0 items-center border-r-2 border-[#a0a0a0] ${cell.className}`}>
        {cell.text}
      </span>
    ))}
    <span className="flex-1 pl-[5px] text-black">75</span>
  </footer>
);

const App = () => (
  <div className="flex h-screen flex-col overflow-hidden bg-[#1c76d0] font-['Open_Sans','Noto_Sans',sans-serif] text-[11px]">
    <TitleBar />
    <div className="flex min-h-0 flex-1">
      <div className="w-[5px] shrink-0 bg-[linear-gradient(#3f97e4_0%,#35b0f2_18%,#5fe0fb_45%,#a0fbfd_75%,#8ff6fd_100%)]" />
      <div className="flex min-w-0 flex-1 flex-col border border-[#2a5c8c] border-t-[#8fc6ee] bg-[#eef0fb]">
        <MenuBar />
        <Ribbon />
        <div className="flex min-h-0 flex-1 border-t border-[#2b579a]">
          <WindowTree />
          <Editor />
        </div>
        <StatusBar />
      </div>
      <div className="w-[5px] shrink-0 bg-[linear-gradient(#1f6dbf,#1d80dc_60%,#1f8cea)]" />
    </div>
    <div className="h-[6px] shrink-0 border-b border-[#0e3b6e] bg-[linear-gradient(90deg,#8ff6fd,#49c8f8_40%,#27a3f5_80%,#1f8cea)]" />
    <div className="h-[3px] shrink-0 bg-[#1470c8]" />
  </div>
);

export default App;
